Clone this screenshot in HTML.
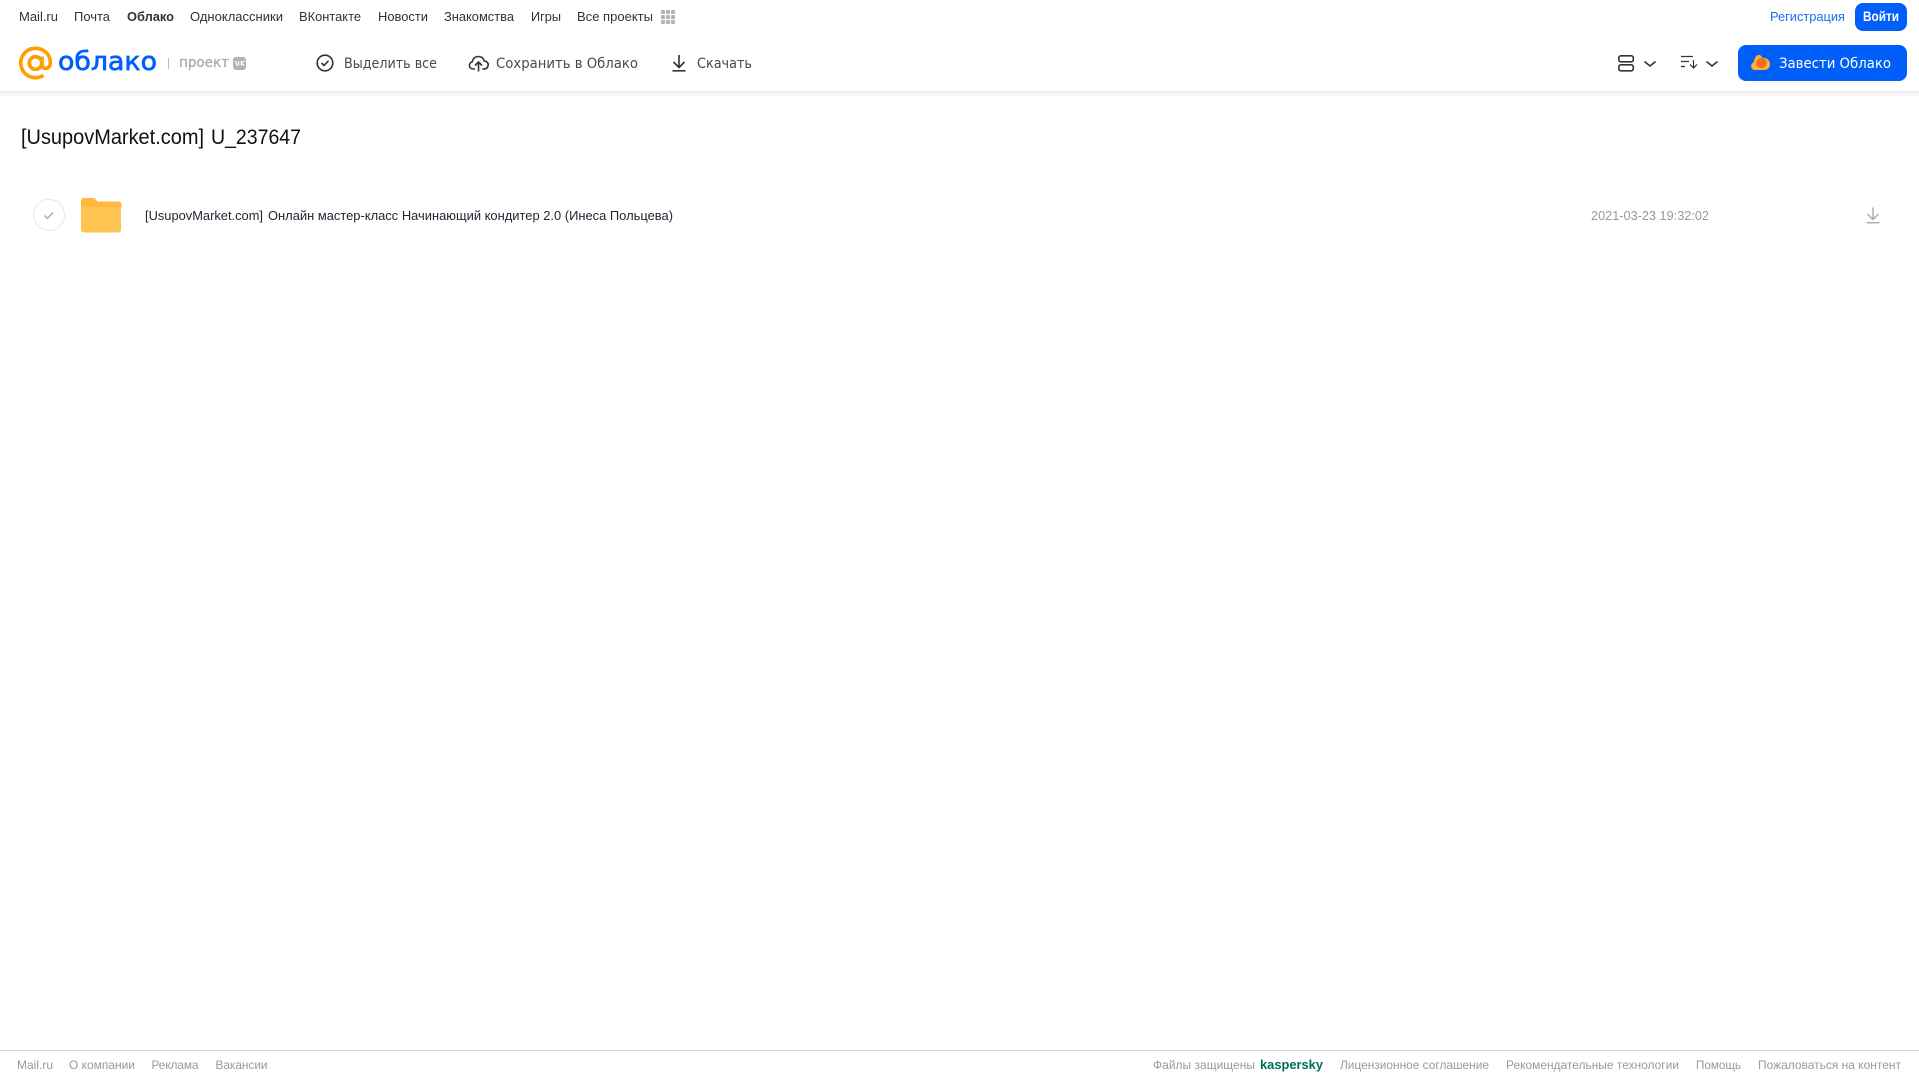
<!DOCTYPE html>
<html lang="ru"><head><meta charset="utf-8"><title>Облако</title>
<style>
html,body{margin:0;padding:0;background:#fff;width:1919px;height:1079px;overflow:hidden}
svg{display:block;position:absolute;left:0;top:0}
text{font-family:"Liberation Sans",Arial,sans-serif}
.n{font-size:13px;fill:#333}
.t{font-size:14px;fill:#4a4a4a;font-family:"DejaVu Sans",sans-serif}
.f{font-size:12px;fill:#999}
</style></head><body>
<svg width="1919" height="1079" viewBox="0 0 1919 1079" xmlns="http://www.w3.org/2000/svg">
<defs><linearGradient id="sh" x1="0" y1="0" x2="0" y2="1"><stop offset="0" stop-color="#f0f0f0"/><stop offset="1" stop-color="#fff"/></linearGradient></defs>
<rect x="0" y="91" width="1919" height="7" fill="url(#sh)"/>

<text class="n" x="19" y="21" textLength="39" lengthAdjust="spacingAndGlyphs">Mail.ru</text>
<text class="n" x="74" y="21" textLength="36" lengthAdjust="spacingAndGlyphs">Почта</text>
<text class="n" x="127" y="21" textLength="47" lengthAdjust="spacingAndGlyphs" font-weight="700">Облако</text>
<text class="n" x="190" y="21" textLength="93" lengthAdjust="spacingAndGlyphs">Одноклассники</text>
<text class="n" x="299" y="21" textLength="62" lengthAdjust="spacingAndGlyphs">ВКонтакте</text>
<text class="n" x="378" y="21" textLength="50" lengthAdjust="spacingAndGlyphs">Новости</text>
<text class="n" x="444" y="21" textLength="70" lengthAdjust="spacingAndGlyphs">Знакомства</text>
<text class="n" x="531" y="21" textLength="30" lengthAdjust="spacingAndGlyphs">Игры</text>
<text class="n" x="577" y="21" textLength="76" lengthAdjust="spacingAndGlyphs">Все проекты</text>
<g fill="#b3b3b3">
<rect x="661" y="10" width="4" height="4" rx="1"/><rect x="666" y="10" width="4" height="4" rx="1"/><rect x="671" y="10" width="4" height="4" rx="1"/>
<rect x="661" y="15" width="4" height="4" rx="1"/><rect x="666" y="15" width="4" height="4" rx="1"/><rect x="671" y="15" width="4" height="4" rx="1"/>
<rect x="661" y="20" width="4" height="4" rx="1"/><rect x="666" y="20" width="4" height="4" rx="1"/><rect x="671" y="20" width="4" height="4" rx="1"/>
</g>

<text x="1770" y="21" font-size="13" fill="#1a6ff5" textLength="75" lengthAdjust="spacingAndGlyphs">Регистрация</text>
<rect x="1855" y="3" width="52" height="28" rx="8" fill="#005ff9"/>
<text x="1863" y="21" font-size="13.500" font-weight="700" fill="#fff" textLength="36" lengthAdjust="spacingAndGlyphs">Войти</text>

<!-- logo -->
<g fill="none" stroke="#ff9e00" stroke-width="3.600">
<circle cx="35.500" cy="63" r="6.300"/>
<path d="M42 56.500v8c0 5.500 8 5.500 8.300-1.500.3-8.500-6.300-14.700-14.800-14.700a14.700 14.700 0 1 0 8 27"/>
</g>
<text x="58" y="70" font-size="26" fill="#005ff9" stroke="#005ff9" stroke-width=".7" style="font-family:'DejaVu Sans',sans-serif" textLength="99" lengthAdjust="spacingAndGlyphs">облако</text>
<rect x="168" y="58" width="1" height="11" fill="#bbb"/>
<text x="179" y="67" font-size="14" fill="#aaa" stroke="#aaa" stroke-width=".3" style="font-family:'DejaVu Sans',sans-serif" textLength="50" lengthAdjust="spacingAndGlyphs">проект</text>
<rect x="233" y="57" width="13" height="13" rx="3" fill="#b3b3b3"/>
<path d="M235.500 61l1.500 4.200h1M238.600 61v4.200M241.300 61v4.500M244.300 61l-3 2.200 3 2.500" fill="none" stroke="#fff" stroke-width="1.200"/>

<!-- toolbar -->
<circle cx="325" cy="63" r="7.800" fill="none" stroke="#333" stroke-width="1.600"/>
<path d="M321.500 63l2.500 2.500 4.500-4.700" fill="none" stroke="#333" stroke-width="1.600"/>
<text class="t" x="344" y="68" textLength="93" lengthAdjust="spacingAndGlyphs">Выделить все</text>

<path d="M475 69h-1.500c-5 0-5.300-6-1.300-7.200 1-3.800 3.300-5.300 6.300-5.300 3 0 5 1.800 5.700 4.500 3.700.5 4.500 3 3.800 5-.6 1.800-2 3-3.800 3h-2" fill="none" stroke="#333" stroke-width="1.600"/>
<path d="M478.500 71.500v-9.500M475 65.500l3.500-3.500 3.500 3.500" fill="none" stroke="#333" stroke-width="1.600"/>
<text class="t" x="496" y="68" textLength="142" lengthAdjust="spacingAndGlyphs">Сохранить в Облако</text>

<path d="M679 55v12M673.500 62l5.500 5.500 5.500-5.500" fill="none" stroke="#333" stroke-width="1.600"/>
<rect x="672.500" y="70" width="13" height="1.600" fill="#333"/>
<text class="t" x="697" y="68" textLength="55" lengthAdjust="spacingAndGlyphs">Скачать</text>

<!-- right controls -->
<g fill="none" stroke="#333" stroke-width="1.600">
<rect x="1618.800" y="55.800" width="14.500" height="6" rx="2"/>
<rect x="1618.800" y="64.800" width="14.500" height="6" rx="2"/>
<path d="M1644.500 61.500l5.500 4.500 5.500-4.500"/>
<path d="M1706.500 61.500l5.500 4.500 5.500-4.500"/>
</g>
<g fill="none" stroke="#333" stroke-width="1.200">
<path d="M1681 56.500h12M1681 61.500h8M1681 66.500h4"/>
<path d="M1693.500 60v8M1690 64.500l3.500 3.500 3.500-3.500"/>
</g>
<rect x="1738" y="45" width="169" height="36" rx="8" fill="#005ff9"/>
<path d="M1755 70c-3 0-4-2.500-3.800-4.300.2-1.900 1.300-3 2.600-3.400.3-3.500 2.300-7.300 5-7.300 1.800 0 3 1.300 3.700 3 3.500-.7 7.500 2 7.500 6 0 3.500-2.500 6-5.500 6z" fill="#ffb03a"/>
<circle cx="1761.500" cy="63" r="5.300" fill="#f27024"/>
<text x="1779" y="68" font-size="14" fill="#fff" style="font-family:'DejaVu Sans',sans-serif" textLength="112" lengthAdjust="spacingAndGlyphs">Завести Облако</text>

<!-- title -->
<text x="21" y="144" font-size="21" fill="#111" textLength="183" lengthAdjust="spacingAndGlyphs">[UsupovMarket.com]</text>
<text x="211" y="144" font-size="21" fill="#111" textLength="90" lengthAdjust="spacingAndGlyphs">U_237647</text>

<!-- row -->
<circle cx="49" cy="215" r="15.500" fill="#fff" stroke="#e8e8e8" stroke-width="1"/>
<path d="M44.500 215.500l3 2.800 5.500-5.800" fill="none" stroke="#a6a6a6" stroke-width="1.300"/>
<path d="M81 201c0-1.700 1.300-3 3-3h8.500c1.500 0 2.500.6 3.300 1.500l1.700 2h21.500c1.700 0 2.500 1 2.500 2.500v4H81z" fill="#ffb940"/>
<path d="M81 207h40v22.500c0 1.700-1.300 3-3 3H84c-1.700 0-3-1.300-3-3z" fill="#ffc452"/>
<text x="145" y="220" font-size="13" fill="#2c2033" textLength="118" lengthAdjust="spacingAndGlyphs">[UsupovMarket.com]</text>
<text x="268" y="220" font-size="13" fill="#2c2033" textLength="405" lengthAdjust="spacingAndGlyphs">Онлайн мастер-класс Начинающий кондитер 2.0 (Инеса Польцева)</text>
<text x="1591" y="220" font-size="13" fill="#999" textLength="118" lengthAdjust="spacingAndGlyphs">2021-03-23 19:32:02</text>
<path d="M1873 207.500v12M1867.500 214l5.500 5.500 5.500-5.500" fill="none" stroke="#aaa" stroke-width="1.400"/>
<rect x="1866.500" y="222" width="13" height="1.400" fill="#aaa"/>

<!-- footer -->
<rect x="0" y="1050" width="1919" height="1" fill="#d9d9d9"/>
<text class="f" x="17" y="1069" textLength="36" lengthAdjust="spacingAndGlyphs">Mail.ru</text>
<text class="f" x="69" y="1069" textLength="66" lengthAdjust="spacingAndGlyphs">О компании</text>
<text class="f" x="151.500" y="1069" textLength="47" lengthAdjust="spacingAndGlyphs">Реклама</text>
<text class="f" x="215.500" y="1069" textLength="52" lengthAdjust="spacingAndGlyphs">Вакансии</text>
<text class="f" x="1153" y="1069" textLength="102" lengthAdjust="spacingAndGlyphs">Файлы защищены</text>
<text x="1260" y="1069" font-size="13" font-weight="700" fill="#006d5c" textLength="63" lengthAdjust="spacingAndGlyphs">kaspersky</text>
<text class="f" x="1340" y="1069" textLength="149" lengthAdjust="spacingAndGlyphs">Лицензионное соглашение</text>
<text class="f" x="1506" y="1069" textLength="173" lengthAdjust="spacingAndGlyphs">Рекомендательные технологии</text>
<text class="f" x="1696" y="1069" textLength="45" lengthAdjust="spacingAndGlyphs">Помощь</text>
<text class="f" x="1758" y="1069" textLength="143" lengthAdjust="spacingAndGlyphs">Пожаловаться на контент</text>
</svg>
</body></html>
